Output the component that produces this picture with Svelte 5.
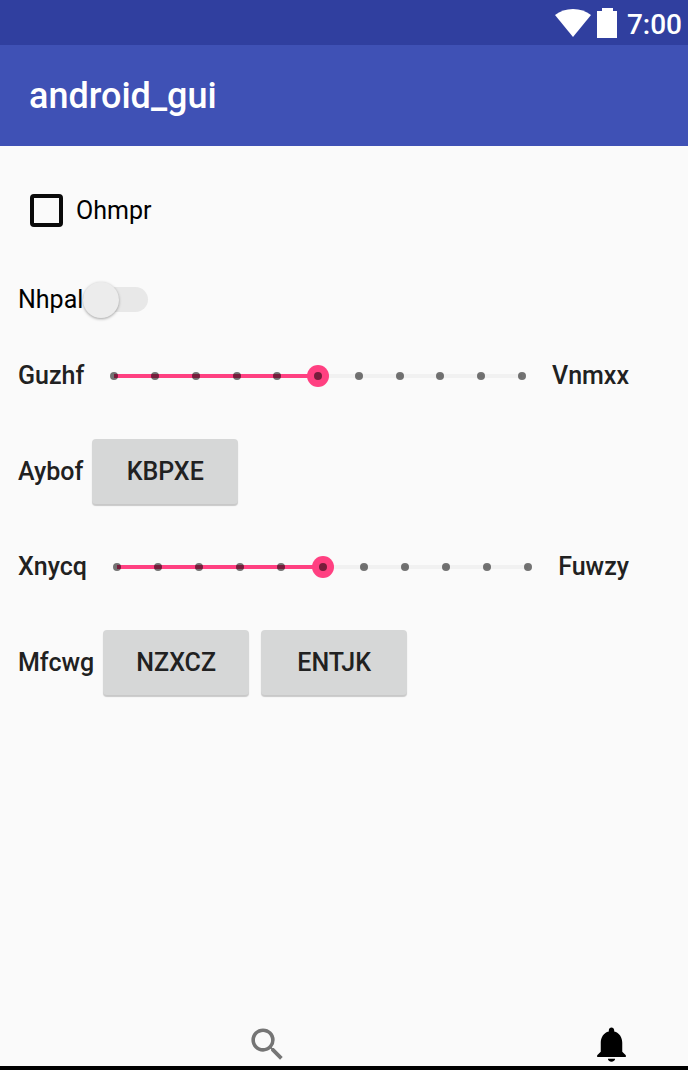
<script>
  let subscribed = $state(false);
  let enabled = $state(false);
  let levelA = $state(5);
  let levelB = $state(5);
  const max = 10;
  const ticks = Array.from({ length: max + 1 }, (_, i) => i);
</script>

{#snippet track(value)}
  <div class="line"><div class="fill" style="width: {(value / max) * 100}%"></div></div>
{/snippet}

{#snippet marks()}
  <div class="ticks">
    {#each ticks as tick (tick)}<span class="tick"></span>{/each}
  </div>
{/snippet}

<div class="screen">
  <div class="status">
    <svg class="wifi" viewBox="0 0 36 28" aria-hidden="true">
      <path d="M0 6C5 2 11 0 18 0s13 2 18 6L18 28z" />
    </svg>
    <svg class="battery" viewBox="0 0 20 30" aria-hidden="true">
      <path d="M5 0h11v3h4v27H0V3h5z" />
    </svg>
    <span>7:00</span>
  </div>
  <header><h1>android_gui</h1></header>

  <main>
    <div class="row check-row">
      <input class="check" id="ohmpr" type="checkbox" bind:checked={subscribed} />
      <label for="ohmpr">Ohmpr</label>
    </div>
    <div class="row switch-row">
      <label for="nhpal">Nhpal</label>
      <input class="switch" id="nhpal" type="checkbox" role="switch" bind:checked={enabled} />
    </div>
    <div class="row slider-row">
      <label for="guzhf">Guzhf</label>
      <div class="slider">
        {@render track(levelA)}
        <input id="guzhf" type="range" min="0" {max} bind:value={levelA} />
        {@render marks()}
      </div>
      <span>Vnmxx</span>
    </div>
    <div class="row button-row">
      <span>Aybof</span>
      <div class="buttons"><button>KBPXE</button></div>
    </div>
    <div class="row slider-row">
      <label for="xnycq">Xnycq</label>
      <div class="slider">
        {@render track(levelB)}
        <input id="xnycq" type="range" min="0" {max} bind:value={levelB} />
        {@render marks()}
      </div>
      <span>Fuwzy</span>
    </div>
    <div class="row button-row">
      <span>Mfcwg</span>
      <div class="buttons"><button>NZXCZ</button><button>ENTJK</button></div>
    </div>
  </main>

  <nav>
    <button class="icon search" aria-label="Search">
      <svg viewBox="0 0 24 24" aria-hidden="true">
        <path d="M15.5 14h-.79l-.28-.27A6.47 6.47 0 0 0 16 9.5 6.5 6.5 0 1 0 9.5 16c1.61 0 3.09-.59 4.23-1.57l.27.28v.79l5 4.99L20.49 19l-4.99-5zm-6 0C7.01 14 5 11.99 5 9.5S7.01 5 9.5 5 14 7.01 14 9.5 11.99 14 9.5 14z" />
      </svg>
    </button>
    <button class="icon" aria-label="Notifications">
      <svg viewBox="0 0 24 24" aria-hidden="true">
        <path d="M10 20h4c0 1-.9 1.6-2 1.6s-2-.6-2-1.6zM18 16v-5c0-3.07-1.64-5.64-4.5-6.32V4c0-.83-.67-1.5-1.5-1.5s-1.5.67-1.5 1.5v.68C7.63 5.36 6 7.92 6 11v5l-2 2v1h16v-1l-2-2z" />
      </svg>
    </button>
  </nav>
</div>

<style>
  :global(body) {
    margin: 0;
    background: #fafafa;
  }
  .screen {
    min-height: 100vh;
    box-sizing: border-box;
    display: flex;
    flex-direction: column;
    background: #fafafa;
    border-bottom: 4px solid #000;
    font: 500 25px/30px Roboto, sans-serif;
    color: #212121;
  }
  .status {
    display: flex;
    justify-content: flex-end;
    align-items: center;
    height: 45px;
    padding: 0 6px;
    background: #303f9f;
    color: #fff;
    font-size: 28px;
  }
  .status svg {
    fill: #fff;
  }
  .status span {
    padding-top: 4px;
  }
  .wifi {
    width: 36px;
    height: 28px;
    margin-right: 6px;
  }
  .battery {
    width: 20px;
    height: 30px;
    margin-right: 10px;
  }
  header {
    display: flex;
    align-items: center;
    height: 101px;
    padding: 0 29px;
    background: #3f51b5;
    color: #fff;
  }
  h1 {
    margin: 0;
    font-size: 36px;
    line-height: 42px;
    font-weight: 500;
  }
  main {
    flex: 1;
    padding: 42px 18px 0;
  }
  .row {
    display: flex;
    align-items: center;
  }
  .check-row,
  .switch-row {
    color: #000;
    font-weight: 400;
  }
  .check-row {
    height: 45px;
    gap: 13px;
    padding-left: 12px;
  }
  .check {
    appearance: none;
    width: 33px;
    height: 33px;
    margin: 0;
    border: 4px solid #0a0a0a;
    border-radius: 4px;
  }
  .check:checked {
    background: #ff4081;
  }
  .switch-row {
    height: 45px;
    margin-top: 44px;
  }
  .switch {
    appearance: none;
    display: flex;
    align-items: center;
    width: 65px;
    height: 25px;
    margin: 0;
    border-radius: 13px;
    background: #e8e8e8;
  }
  .switch::before {
    content: "";
    width: 36px;
    height: 36px;
    border-radius: 50%;
    background: #ececec;
    box-shadow: 0 1px 3px rgba(0, 0, 0, 0.35);
  }
  .switch:checked {
    justify-content: flex-end;
    background: #ff80ab;
  }
  .slider-row {
    height: 60px;
    margin-top: 24px;
    padding-right: 41px;
    gap: 19px;
  }
  .slider {
    flex: 1;
    display: grid;
    align-items: center;
  }
  .slider > * {
    grid-area: 1 / 1;
  }
  .line {
    height: 4px;
    margin: 0 11px;
    background: #f1f1f1;
  }
  .fill {
    height: 100%;
    background: #ff4081;
  }
  .slider input {
    appearance: none;
    width: 100%;
    height: 24px;
    margin: 0;
    background: transparent;
  }
  .slider input::-webkit-slider-thumb {
    appearance: none;
    width: 22px;
    height: 22px;
    border-radius: 50%;
    background: #ff4081;
  }
  .ticks {
    z-index: 1;
    display: flex;
    justify-content: space-between;
    margin: 0 7px;
    pointer-events: none;
  }
  .tick {
    width: 8px;
    height: 8px;
    border-radius: 50%;
    background: rgba(0, 0, 0, 0.54);
  }
  .button-row {
    height: 65px;
    margin-top: 33px;
    gap: 9px;
  }
  .button-row + .slider-row {
    margin-top: 33px;
  }
  .buttons {
    display: flex;
    gap: 12px;
  }
  .buttons button {
    min-width: 146px;
    height: 65px;
    padding: 0 16px;
    border: 0;
    border-radius: 4px;
    background: #d6d7d7;
    box-shadow: 0 2px 1px rgba(0, 0, 0, 0.2);
    color: #212121;
    font: inherit;
  }
  nav {
    display: flex;
    justify-content: space-between;
    padding: 0 8% 0 35.7%;
  }
  .icon {
    display: flex;
    padding: 0;
    border: 0;
    background: none;
    color: #000;
  }
  .search {
    color: #757575;
  }
  .icon svg {
    width: 43px;
    height: 43px;
    fill: currentColor;
  }
</style>
